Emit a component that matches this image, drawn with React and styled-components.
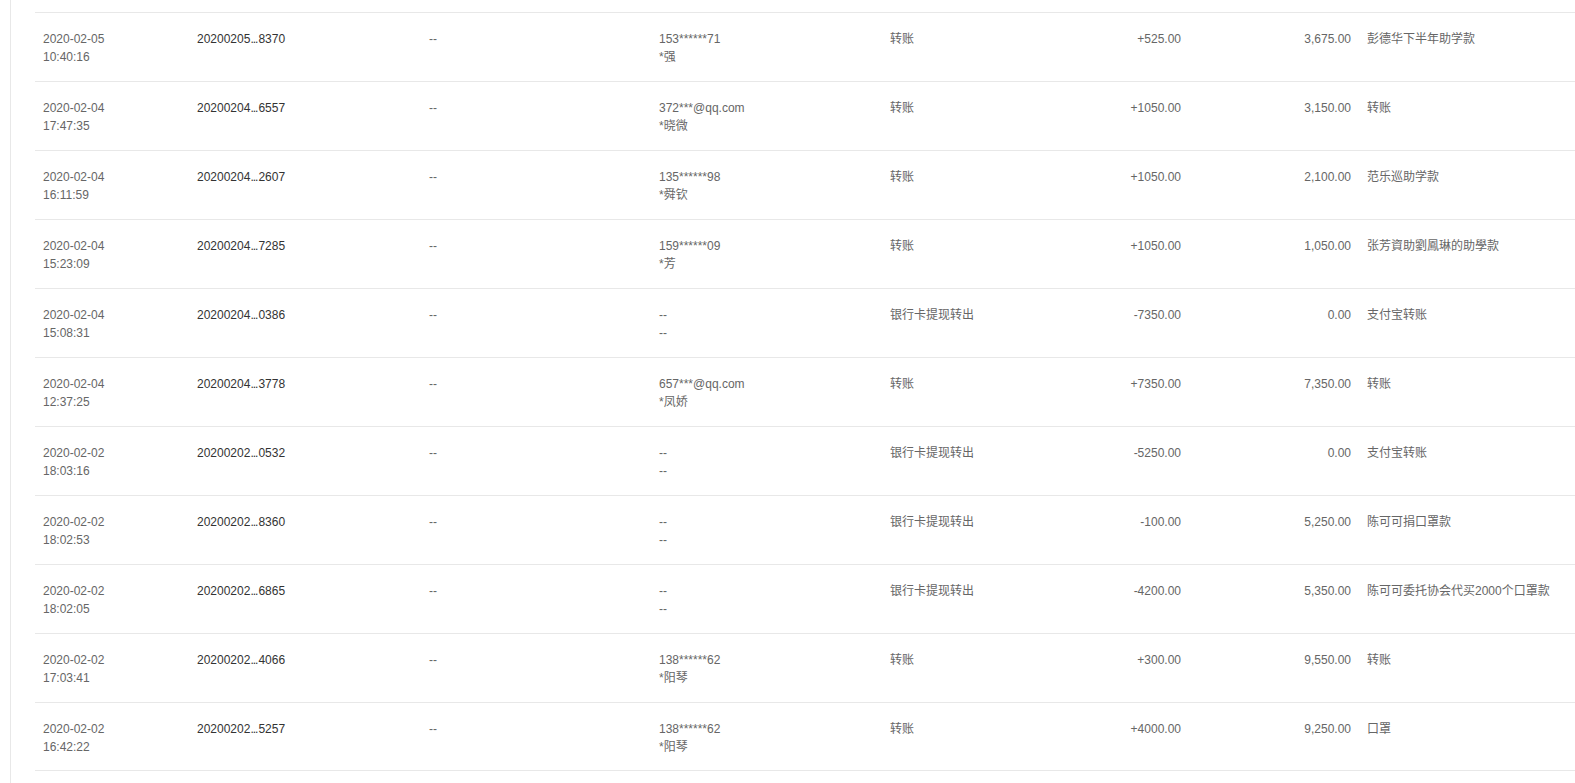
import React from 'react';
import styled, { createGlobalStyle } from 'styled-components';

const GlobalStyle = createGlobalStyle`
  html, body {
    margin: 0;
    padding: 0;
    background: #fff;
  }
  body {
    font-family: "Liberation Sans", Arial, "Noto Sans CJK SC", sans-serif;
    font-size: 12px;
    color: #666;
  }
`;

const Page = styled.div`
  padding-left: 10px;
  min-height: 100vh;
  box-sizing: border-box;
  overflow: hidden;
`;

const Main = styled.div`
  border-left: 1px solid #e8e8e8;
  min-height: 100vh;
  padding: 12px 0 0 24px;
  box-sizing: border-box;
`;

const Row = styled.div`
  display: grid;
  grid-template-columns: 154px 232px 230px 231px 230px 77px 170px 1fr;
  height: 69px;
  box-sizing: border-box;
  border-top: 1px solid #e8e8e8;
  &:last-child {
    border-bottom: 1px solid #e8e8e8;
  }
`;

const Cell = styled.div`
  padding: 17px 8px 0;
  line-height: 18px;
  text-align: ${({ align }) => align || 'left'};
  color: ${({ dark }) => (dark ? '#333' : '#666')};
  white-space: nowrap;
`;

const Line = styled.div`
  height: 18px;
`;

const Dots = styled.span`
  letter-spacing: -1px;
  margin-right: 1px;
`;

const rows = [
  ['2020-02-05', '10:40:16', '20200205', '8370', '153******71', '*强', '转账', '+525.00', '3,675.00', '彭德华下半年助学款'],
  ['2020-02-04', '17:47:35', '20200204', '6557', '372***@qq.com', '*晓微', '转账', '+1050.00', '3,150.00', '转账'],
  ['2020-02-04', '16:11:59', '20200204', '2607', '135******98', '*舜钦', '转账', '+1050.00', '2,100.00', '范乐巡助学款'],
  ['2020-02-04', '15:23:09', '20200204', '7285', '159******09', '*芳', '转账', '+1050.00', '1,050.00', '张芳資助劉鳳琳的助學款'],
  ['2020-02-04', '15:08:31', '20200204', '0386', '--', '--', '银行卡提现转出', '-7350.00', '0.00', '支付宝转账'],
  ['2020-02-04', '12:37:25', '20200204', '3778', '657***@qq.com', '*凤娇', '转账', '+7350.00', '7,350.00', '转账'],
  ['2020-02-02', '18:03:16', '20200202', '0532', '--', '--', '银行卡提现转出', '-5250.00', '0.00', '支付宝转账'],
  ['2020-02-02', '18:02:53', '20200202', '8360', '--', '--', '银行卡提现转出', '-100.00', '5,250.00', '陈可可捐口罩款'],
  ['2020-02-02', '18:02:05', '20200202', '6865', '--', '--', '银行卡提现转出', '-4200.00', '5,350.00', '陈可可委托协会代买2000个口罩款'],
  ['2020-02-02', '17:03:41', '20200202', '4066', '138******62', '*阳琴', '转账', '+300.00', '9,550.00', '转账'],
  ['2020-02-02', '16:42:22', '20200202', '5257', '138******62', '*阳琴', '转账', '+4000.00', '9,250.00', '口罩'],
];

export default function App() {
  return (
    <Page>
      <GlobalStyle />
      <Main>
        {rows.map((r, i) => (
          <Row key={i}>
            <Cell>
              <Line>{r[0]}</Line>
              <Line>{r[1]}</Line>
            </Cell>
            <Cell dark>
              {r[2]}
              <Dots>...</Dots>
              {r[3]}
            </Cell>
            <Cell>--</Cell>
            <Cell>
              <Line>{r[4]}</Line>
              <Line>{r[5]}</Line>
            </Cell>
            <Cell>{r[6]}</Cell>
            <Cell align="right">{r[7]}</Cell>
            <Cell align="right">{r[8]}</Cell>
            <Cell>{r[9]}</Cell>
          </Row>
        ))}
      </Main>
    </Page>
  );
}
